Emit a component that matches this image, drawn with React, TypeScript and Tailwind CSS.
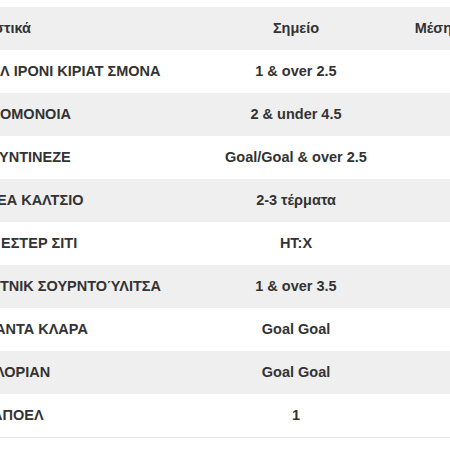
import React from 'react'

type Row = { match: string; shift: string; pick: string }

// first column is scrolled off to the left, only the tail of each match shows
const rows: Row[] = [
    { match: 'Λ ΙΡΟΝΙ ΚΙΡΙΑΤ ΣΜΟΝΑ', shift: 'ml-0', pick: '1 & over 2.5' },
    { match: 'ΟΜΟΝΟΙΑ', shift: 'ml-0', pick: '2 & under 4.5' },
    { match: 'ΥΝΤΙΝΕΖΕ', shift: '-ml-[1px]', pick: 'Goal/Goal & over 2.5' },
    { match: 'ΕΑ ΚΑΛΤΣΙΟ', shift: '-ml-[3px]', pick: '2-3 τέρματα' },
    { match: 'ΕΣΤΕΡ ΣΙΤΙ', shift: 'ml-[1px]', pick: 'HT:X' },
    { match: 'ΤΝΙΚ ΣΟΥΡΝΤΟΎΛΙΤΣΑ', shift: 'ml-0', pick: '1 & over 3.5' },
    { match: 'ΑΝΤΑ ΚΛΑΡΑ', shift: '-ml-[5px]', pick: 'Goal Goal' },
    { match: 'ΛΟΡΙΑΝ', shift: '-ml-[5px]', pick: 'Goal Goal' },
    { match: 'ΑΠΟΕΛ', shift: '-ml-[8px]', pick: '1' },
]

export default function App() {
    return (
        <div className="w-[450px] h-[450px] overflow-hidden bg-white pt-[7px] font-['Liberation_Sans',Arial,sans-serif] text-[14.5px] font-bold text-[#333333]">
            <div className="w-[544px]">
                <div className="grid grid-cols-[200px_192px_152px] h-[43px] items-center bg-[#efefef]">
                    <div className="-ml-[6px] whitespace-nowrap">στικά</div>
                    <div className="text-center">Σημείο</div>
                    <div className="text-center whitespace-nowrap">Μέση απόδοση</div>
                </div>
                {rows.map((r, i) => (
                    <div
                        key={i}
                        className={
                            'grid grid-cols-[200px_192px_152px] h-[43px] items-center ' +
                            (i % 2 === 1 ? 'bg-[#efefef]' : 'bg-white')
                        }
                    >
                        <div className={'whitespace-nowrap ' + r.shift}>{r.match}</div>
                        <div className="text-center whitespace-nowrap">{r.pick}</div>
                        <div></div>
                    </div>
                ))}
                <div className="border-t border-[#e6e6e6]"></div>
            </div>
        </div>
    )
}
